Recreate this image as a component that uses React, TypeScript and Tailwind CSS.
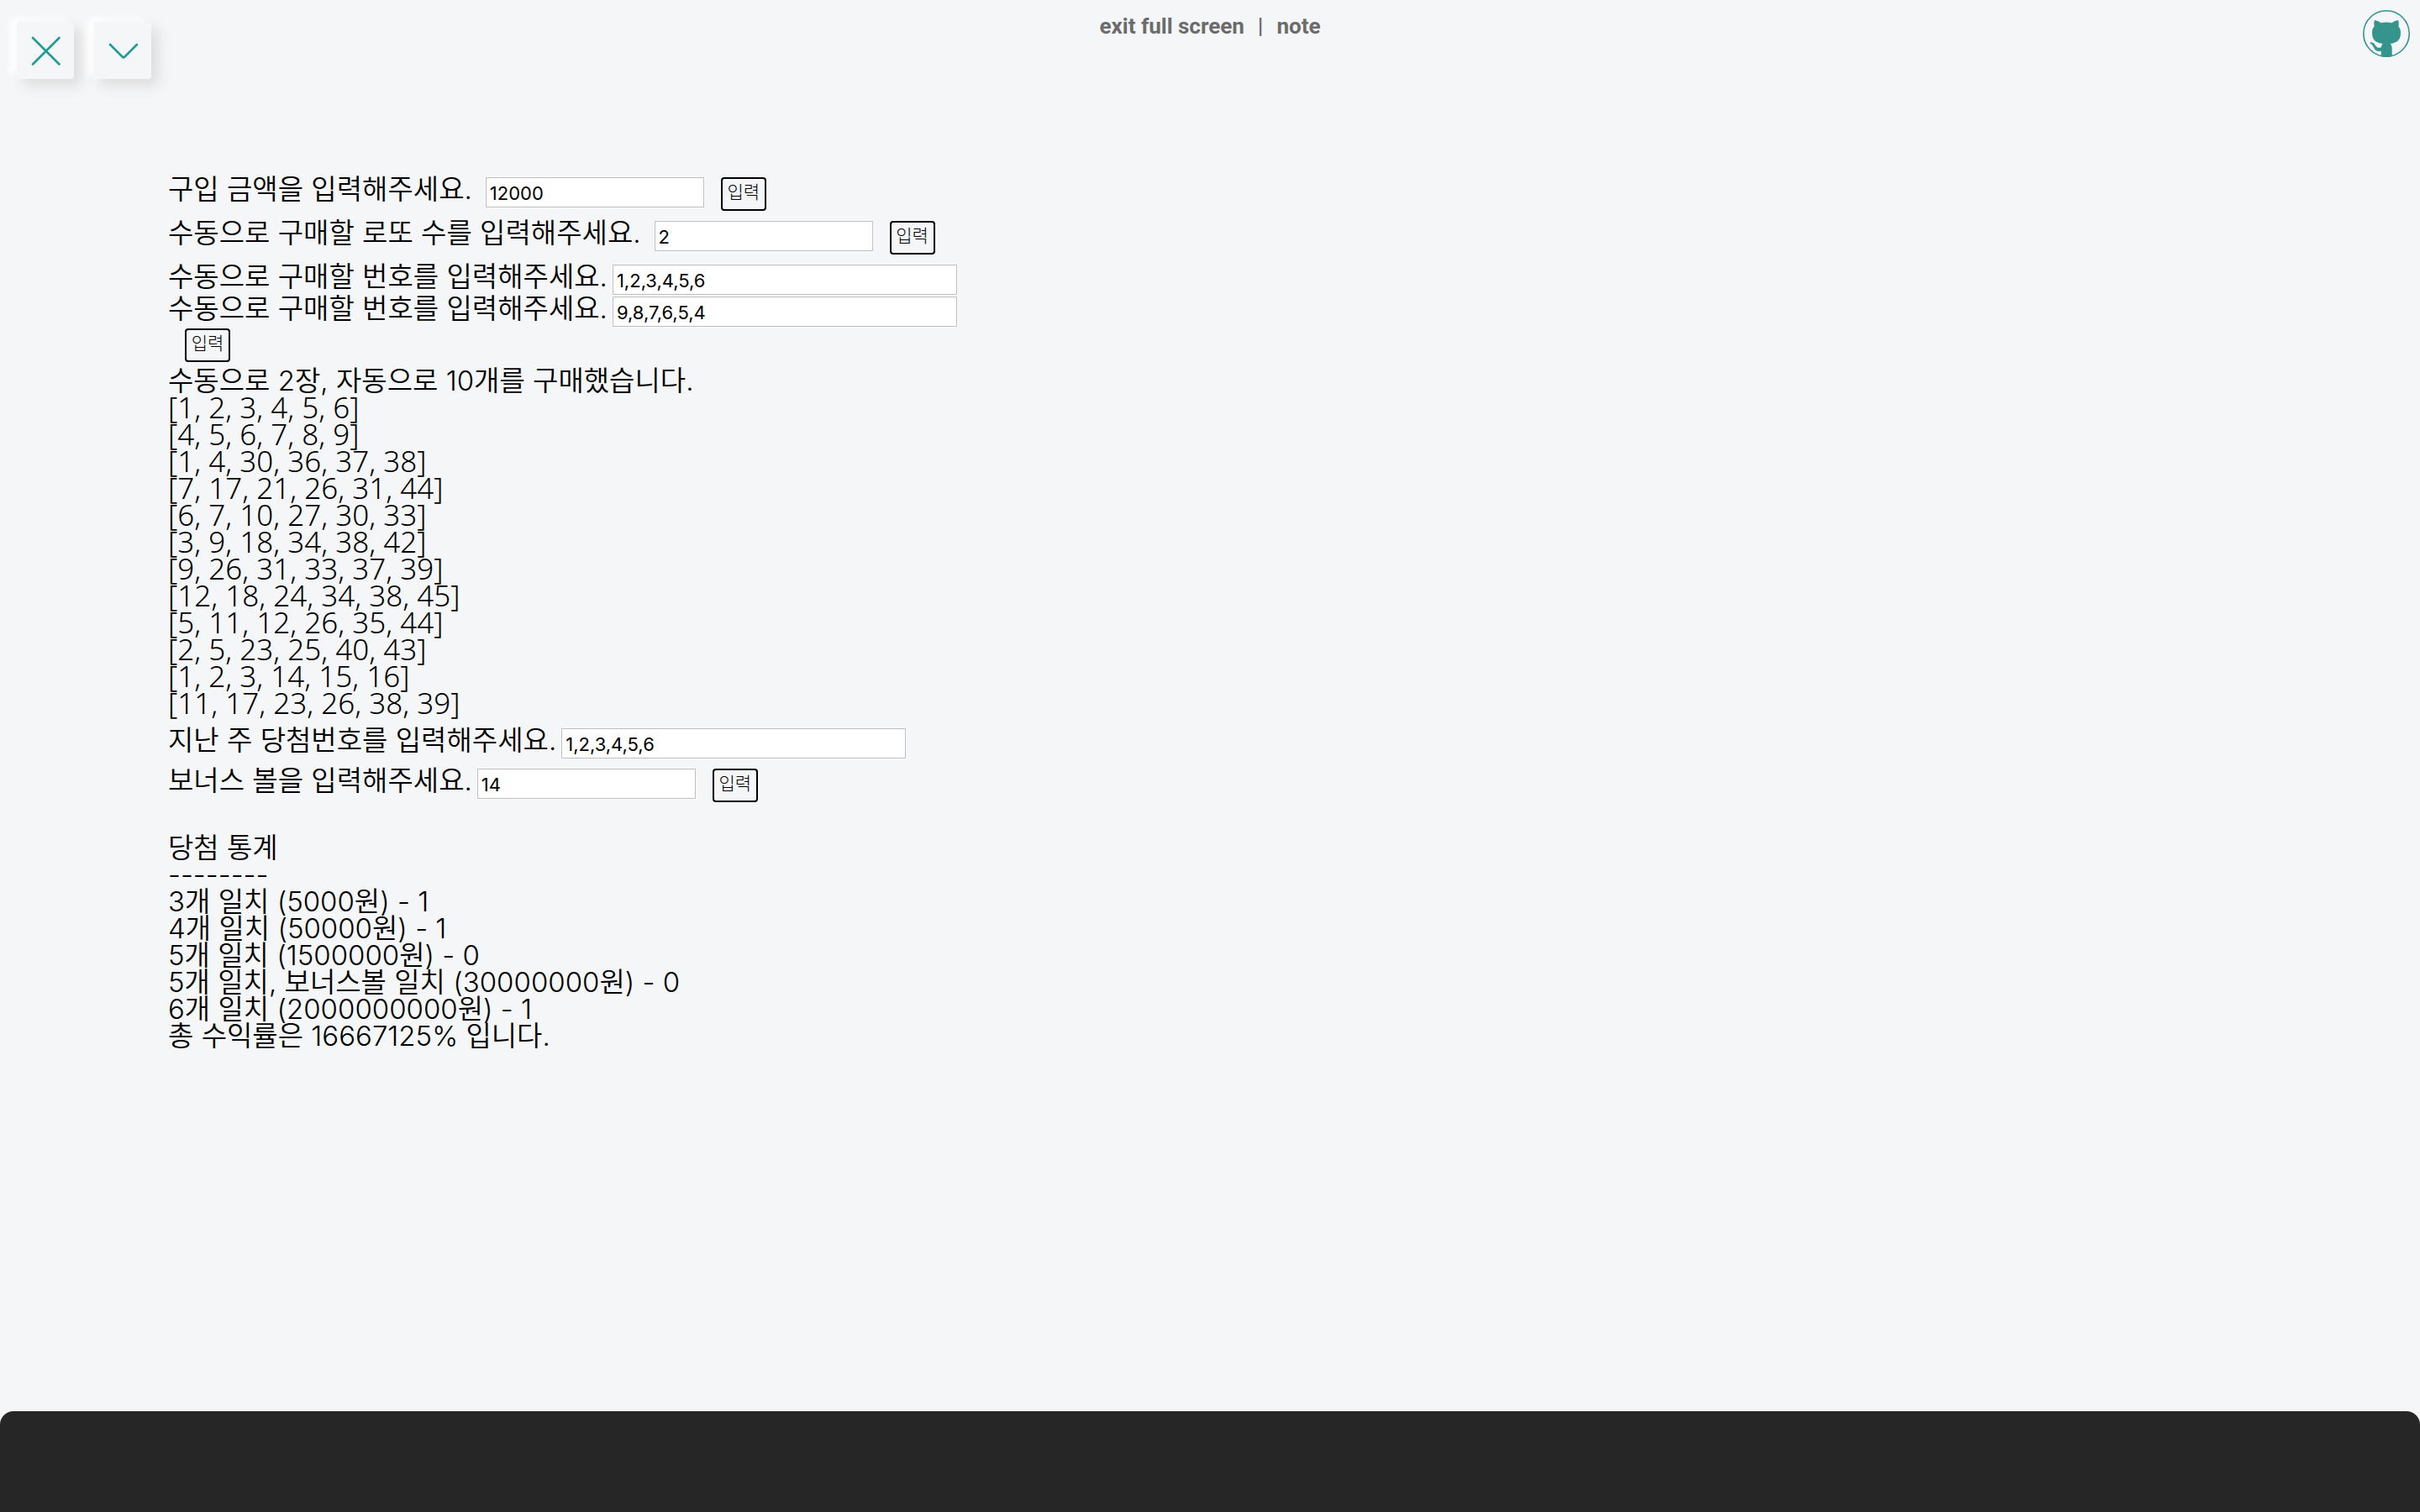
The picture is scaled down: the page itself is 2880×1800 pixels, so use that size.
import { useState, type ReactNode } from "react";

const tickets = [
  [1, 2, 3, 4, 5, 6],
  [4, 5, 6, 7, 8, 9],
  [1, 4, 30, 36, 37, 38],
  [7, 17, 21, 26, 31, 44],
  [6, 7, 10, 27, 30, 33],
  [3, 9, 18, 34, 38, 42],
  [9, 26, 31, 33, 37, 39],
  [12, 18, 24, 34, 38, 45],
  [5, 11, 12, 26, 35, 44],
  [2, 5, 23, 25, 40, 43],
  [1, 2, 3, 14, 15, 16],
  [11, 17, 23, 26, 38, 39],
];

const results = [
  "당첨 통계",
  "--------",
  "3개 일치 (5000원) - 1",
  "4개 일치 (50000원) - 1",
  "5개 일치 (1500000원) - 0",
  "5개 일치, 보너스볼 일치 (30000000원) - 0",
  "6개 일치 (2000000000원) - 1",
  "총 수익률은 16667125% 입니다.",
];

function Field({
  id,
  label,
  initial,
  wide = false,
  spaced = false,
  children,
}: {
  id: string;
  label: string;
  initial: string;
  wide?: boolean;
  spaced?: boolean;
  children?: ReactNode;
}) {
  const [value, setValue] = useState(initial);
  return (
    <div className="flex h-9 items-start">
      <label htmlFor={id} className={`shrink-0 leading-7 whitespace-nowrap ${spaced ? "pr-4" : "pr-1.5"}`}>
        {label}
      </label>
      <input
        id={id}
        type="text"
        value={value}
        onChange={(e) => setValue(e.target.value)}
        className={`h-9 shrink-0 border border-[#bfbfbf] bg-white px-1 pt-0.5 text-[22px] leading-7 font-normal text-black outline-1 outline-[#fafafa] ${wide ? "w-[410px]" : "w-[260px]"}`}
      />
      {children}
    </div>
  );
}

function EnterButton() {
  return (
    <button
      type="button"
      className="ml-5 h-10 w-[54px] shrink-0 rounded border-2 border-black pb-1 text-center text-[21px] leading-8 font-light whitespace-nowrap"
    >
      입력
    </button>
  );
}

function SquareButton({ label, children }: { label: string; children: ReactNode }) {
  return (
    <button
      type="button"
      aria-label={label}
      className="flex size-[68px] items-center justify-center rounded bg-[#f5f6f8] shadow-[8px_8px_16px_#dcdcdc,-8px_-4px_8px_#ffffff]"
    >
      <svg
        viewBox="0 0 36 36"
        className="size-9 text-[#1f9c95]"
        fill="none"
        stroke="currentColor"
        strokeWidth="2.6"
        strokeLinecap="round"
        strokeLinejoin="round"
      >
        {children}
      </svg>
    </button>
  );
}

export default function App() {
  return (
    <div className="flex min-h-screen flex-col bg-[#f5f6f8] font-['Inter','Noto_Sans_CJK_KR',sans-serif] text-black">
      <header className="grid grid-cols-3 items-start">
        <div className="flex gap-6 pt-[26px] pl-5">
          <SquareButton label="close">
            <path d="M3 3 34.500 34.500M34.500 3 3 34.500" />
          </SquareButton>
          <SquareButton label="expand">
            <path d="M3 11 17.500 25.500Q19 27 20.500 25.500L35 11" />
          </SquareButton>
        </div>
        <nav className="flex justify-center gap-4 pt-4 font-['Roboto',sans-serif] text-[26px] leading-[30px] font-bold text-[#6b6b6b]">
          <button type="button">exit full screen</button>
          <span>|</span>
          <button type="button">note</button>
        </nav>
        <div className="flex justify-end pt-3 pr-3">
          <a href="#github" aria-label="GitHub">
            <svg viewBox="0 0 56 56" className="size-14 text-[#35958d]">
              <circle cx="28" cy="28" r="27.200" fill="none" stroke="currentColor" strokeWidth="1.600" />
              <path
                fill="currentColor"
                d="M14 12C16.500 12.300 19 13.500 21.500 15.200Q28 13.700 34.500 15.200C37 13.500 39.500 12.300 42 12Q43.300 15.500 42.300 19Q45 22 45 27C45 36 40.500 39 32.800 39.900Q34.700 42 34.700 45V55Q28 56.800 21.700 55V48.800C16.500 49.800 14.200 47.500 12.800 44.300C11.800 42 10.500 40.500 8.800 39.700C8 39.200 8.500 38.300 9.700 38.300C12.500 38.300 14 40.500 15.200 42.500C16.700 45 19 45.300 21.800 44.200Q22 41.500 23.600 39.900C15.500 39 11 36 11 27Q11 22 13.700 19Q12.700 15.500 14 12Z"
              />
            </svg>
          </a>
        </div>
      </header>

      <main className="flex grow flex-col px-[200px] pt-[117px] text-[33px] leading-8 font-[350]">
        <form className="flex flex-col" onSubmit={(e) => e.preventDefault()}>
          <div className="flex flex-col gap-4">
            <Field id="amount" label="구입 금액을 입력해주세요." initial="12000" spaced>
              <EnterButton />
            </Field>
            <Field id="count" label="수동으로 구매할 로또 수를 입력해주세요." initial="2" spaced>
              <EnterButton />
            </Field>
            <div className="flex flex-col items-start gap-0.5">
              <Field id="manual-1" label="수동으로 구매할 번호를 입력해주세요." initial="1,2,3,4,5,6" wide />
              <Field id="manual-2" label="수동으로 구매할 번호를 입력해주세요." initial="9,8,7,6,5,4" wide />
              <EnterButton />
            </div>
          </div>

          <div className="pt-1.5">
            <p>수동으로 2장, 자동으로 10개를 구매했습니다.</p>
            <ul className="font-['Noto_Sans',sans-serif] text-[35px] leading-8">
              {tickets.map((t) => (
                <li key={t.join()}>[{t.join(", ")}]</li>
              ))}
            </ul>
          </div>

          <div className="flex flex-col gap-3 pt-3.5">
            <Field id="winning" label="지난 주 당첨번호를 입력해주세요." initial="1,2,3,4,5,6" wide />
            <Field id="bonus" label="보너스 볼을 입력해주세요." initial="14">
              <EnterButton />
            </Field>
          </div>
        </form>

        <section className="pt-[42px]">
          {results.map((line) => (
            <p key={line}>{line}</p>
          ))}
        </section>
      </main>

      <footer className="h-30 rounded-t-2xl bg-[#262626]" />
    </div>
  );
}
